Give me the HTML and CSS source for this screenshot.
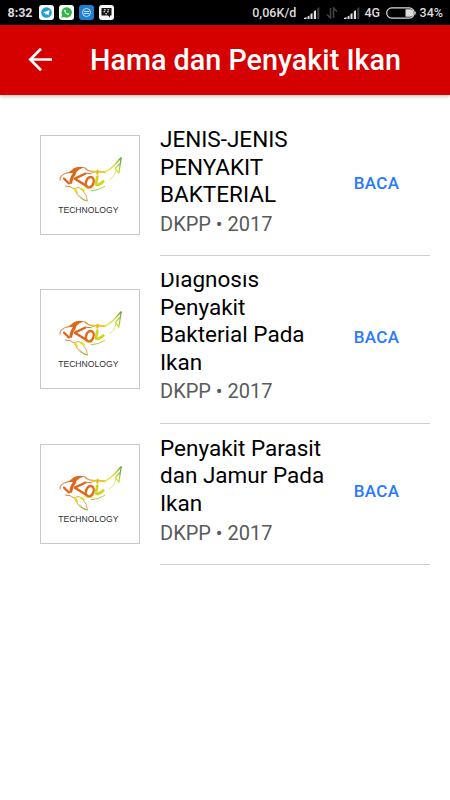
FILE: index.html
```html
<!DOCTYPE html>
<html lang="id">
<head>
<meta charset="utf-8">
<title>Hama dan Penyakit Ikan</title>
<link rel="stylesheet" href="styles.css">
</head>
<body>
<svg class="defs" width="0" height="0" aria-hidden="true">
  <defs>
    <linearGradient id="tail" gradientUnits="userSpaceOnUse" x1="62" y1="36" x2="82" y2="22">
      <stop offset="0" stop-color="#f3e21c"/><stop offset=".55" stop-color="#c8dc22"/><stop offset="1" stop-color="#4f9e2c"/>
    </linearGradient>
    <linearGradient id="body" gradientUnits="userSpaceOnUse" x1="20" y1="40" x2="70" y2="40">
      <stop offset="0" stop-color="#d9601b"/><stop offset=".55" stop-color="#ee9a2c"/><stop offset="1" stop-color="#e8e02a"/>
    </linearGradient>
    <linearGradient id="belly" gradientUnits="userSpaceOnUse" x1="34" y1="48" x2="76" y2="40">
      <stop offset="0" stop-color="#dce024"/><stop offset=".4" stop-color="#8cc84a"/><stop offset="1" stop-color="#d8e430"/>
    </linearGradient>
    <g id="koi" fill="none" stroke-linecap="round" stroke-linejoin="round">
      <path d="M19.500 45C19 42 22 39 27 37.500" stroke="#dd8a50" stroke-width="1.100"/>
      <path d="M25.500 38.500Q30 36.500 33.500 33 37 30.300 45 32 38 33.500 35 38.500Q30 37 25.500 38.500Z" fill="#dc6a1e"/>
      <path d="M44.500 32.300Q48 36.500 52.500 35.800" stroke="#e58b32" stroke-width="1.100"/>
      <path d="M52.500 36.800Q58 35.800 65 37" stroke="#e9c322" stroke-width="2"/>
      <path d="M34.500 38Q30.500 42.500 30.500 47.500" stroke="#dc651b" stroke-width="2.900"/>
      <path d="M45 38.500 34.500 43.500 46.500 51" stroke="#dc651b" stroke-width="2.400"/>
      <path d="M23.500 43.500 28.500 48.500" stroke="#dc651b" stroke-width="2.200"/>
      <path d="M45 38 51.500 38.500" stroke="#e07420" stroke-width="1"/>
      <ellipse cx="49.800" cy="47.200" rx="3.800" ry="5.500" transform="rotate(18 49.800 47.200)" stroke="#df6b1d" stroke-width="2.500"/>
      <path d="M57.500 41.500 56 49Q57.500 51.500 63.500 46.500" stroke="#d3d522" stroke-width="2.900"/>
      <path d="M57.800 35.500 57.500 38.500" stroke="#efb21f" stroke-width="2.200"/>
      <path d="M65 36.800C72 34.500 76 28 81.500 22.500" stroke="url(#tail)" stroke-width="1.300"/>
      <path d="M81.800 22.500 80.500 31 79.500 38 76 33 80 28.500" stroke="url(#tail)" stroke-width="1.200"/>
      <path d="M76.500 34Q76 41 70 44.500" stroke="#dae446" stroke-width=".8"/>
      <path d="M25 51Q31 51 34.500 54.500Q38 50.500 42 55Q47 60 47.500 66Q39.500 65 36 58" stroke="url(#body)" stroke-width=".9"/>
      <path d="M34.500 54 36.500 57.500M41 54 43.500 55.500" stroke="#dce024" stroke-width="2.300"/>
      <path d="M39.500 61.500Q43 66 47 66.500" stroke="#74b83f" stroke-width=".9"/>
      <path d="M51 56Q59 55.500 65 51.500" stroke="url(#belly)" stroke-width="1"/>
      <path d="M43 52Q49 54.500 54 53.500" stroke="#eadb38" stroke-width=".6"/>
    </g>
    <g id="signal">
      <path d="M0 11 2.500 10V12H0ZM3.500 9.500 5.500 8.500V12H3.500ZM6.500 7 8.500 6V12H6.500ZM9.800 4.500 12 3V12H9.800Z" fill="#e2e2e2"/>
      <path d="M13.300 1.500 15.300 0V12H13.300Z" fill="#454545"/>
    </g>
  </defs>
</svg>

<div class="statusbar">
  <span class="clock">8:32</span>
  <div class="notifications">
    <svg width="15" height="15" viewBox="0 0 15 15"><rect width="15" height="15" rx="3" fill="#f7fbfd"/><circle cx="7.500" cy="7.500" r="5.300" fill="#249dd8"/><path d="M4 7.400 10.700 4.900 9.600 10.300 7.600 8.900 6.600 9.900 6.400 8.200Z" fill="#fff"/></svg>
    <svg width="15" height="15" viewBox="0 0 15 15"><rect width="15" height="15" rx="3" fill="#fafdfa"/><path d="M2.300 12.700 3.100 9.900A5.200 5.200 0 1 1 5.200 12Z" fill="#32b64b"/><path d="M5.200 5Q5.200 8.900 9.600 10L10.300 8.800 8.900 8 8.200 8.700Q6.900 8 6.400 6.900L7 6.200 6.400 4.700Z" fill="#fff"/></svg>
    <svg width="15" height="15" viewBox="0 0 15 15"><rect width="15" height="15" rx="3" fill="#1f7fd0"/><circle cx="7.500" cy="7.500" r="4" fill="none" stroke="#c9e3fa" stroke-width="1"/><path d="M5 6.500H10M5 8.500H10" stroke="#c9e3fa" stroke-width="1"/></svg>
    <svg width="15" height="15" viewBox="0 0 15 15"><rect width="15" height="15" rx="3" fill="#f8f8f8"/><path d="M2.500 3H12.500V10.500H11V12.500L9 10.500H2.500Z" fill="#151515"/><path d="M5 4.800H6.800M8.500 4.800H10.200M4.500 6.800H6.200M8 6.800H9.800M6.300 8.800H8" stroke="#fff" stroke-width="1"/></svg>
  </div>
  <div class="system">
    <span class="speed">0,06K/d</span>
    <svg class="sig1" width="16" height="12"><use href="#signal"/></svg>
    <svg class="arrows" width="12" height="12" viewBox="0 0 12 12" fill="none" stroke="#464646" stroke-width="1.500"><path d="M4.500 1V11L1 7.500M7.500 11V1L11 4.500"/></svg>
    <svg class="sig2" width="16" height="12"><use href="#signal"/></svg>
    <span class="network">4G</span>
    <svg class="battery" width="31" height="12" viewBox="0 0 31 12"><rect x=".7" y=".9" width="27.600" height="10.200" rx="5" fill="none" stroke="#dcdcdc" stroke-width="1.200"/><path d="M19.500 2.300H24A3.700 3.700 0 0 1 24 9.700H19.500Z" fill="#dcdcdc"/><path d="M29 3.500Q30.800 6 29 8.500Z" fill="#dcdcdc"/></svg>
    <span class="percent">34%</span>
  </div>
</div>

<header class="appbar">
  <svg class="back" width="24" height="24" viewBox="0 0 24 24" fill="none" stroke="#fff" stroke-width="2.700"><path d="M24 11.500H2.500M13 .8 2.300 11.500 13 22.200"/></svg>
  <h1>Hama dan Penyakit Ikan</h1>
</header>

<main class="list">
  <article class="item">
    <svg class="thumb" width="100" height="100" viewBox="0 0 100 100"><use href="#koi"/><text x="17.500" y="78.500" textLength="61.500" lengthAdjust="spacingAndGlyphs">TECHNOLOGY</text></svg>
    <div class="content">
      <div class="text"><h2>JENIS-JENIS PENYAKIT BAKTERIAL</h2><p>DKPP • 2017</p></div>
      <a class="read">BACA</a>
    </div>
  </article>
  <article class="item item-clipped">
    <svg class="thumb" width="100" height="100" viewBox="0 0 100 100"><use href="#koi"/><text x="17.500" y="78.500" textLength="61.500" lengthAdjust="spacingAndGlyphs">TECHNOLOGY</text></svg>
    <div class="content">
      <div class="text"><h2>Diagnosis Penyakit Bakterial Pada Ikan</h2><p>DKPP • 2017</p></div>
      <a class="read">BACA</a>
    </div>
  </article>
  <article class="item">
    <svg class="thumb" width="100" height="100" viewBox="0 0 100 100"><use href="#koi"/><text x="17.500" y="78.500" textLength="61.500" lengthAdjust="spacingAndGlyphs">TECHNOLOGY</text></svg>
    <div class="content">
      <div class="text"><h2>Penyakit Parasit dan Jamur Pada Ikan</h2><p>DKPP • 2017</p></div>
      <a class="read">BACA</a>
    </div>
  </article>
</main>
</body>
</html>
```
FILE: styles.css
```css
* { box-sizing: border-box; }
body { margin: 0; height: 800px; overflow: hidden; background: #fff; font-family: Roboto, sans-serif; color: #000; }
h1, h2, p { margin: 0; }
svg { display: block; flex: none; }
.defs { position: absolute; }

.statusbar { display: flex; align-items: center; height: 25px; padding: 0 7.5px; background: #000; color: #dcdcdc; font-size: 12.5px; font-weight: 500; line-height: 25px; white-space: nowrap; }
.clock { width: 31px; font-weight: 700; }
.notifications { display: flex; gap: 5px; }
.system { display: flex; align-items: center; margin-left: auto; }
.speed { letter-spacing: .05px; }
.sig1 { margin-left: 7.5px; }
.arrows { margin: 0 5px 0 6px; }
.sig2 { margin-left: 1px; }
.network { margin-left: 4.5px; }
.battery { margin: 1px 2.5px 0 6px; }
.percent { margin-right: -.5px; }

.appbar { position: relative; display: flex; align-items: center; height: 70px; padding-left: 28px; background: #d50000; box-shadow: 0 1px 4px rgba(0, 0, 0, .3); color: #fff; }
.appbar h1 { margin-left: 38px; font-size: 28.75px; font-weight: 500; line-height: 70px; white-space: nowrap; }

.list { padding: 20px 20px 0 40px; }
.item { display: flex; align-items: center; }
.thumb { width: 100px; height: 100px; border: 1px solid #c8c8c8; margin: -1px 20px 0 0; }
.thumb text { font-family: "Liberation Sans", sans-serif; font-size: 8.5px; fill: #303030; }
.content { display: flex; flex: 1; align-items: center; border-bottom: 1px solid #cfcfcf; }
.text { width: 173px; margin: 16px 0 14.5px; overflow: hidden; }
.text h2 { margin-top: -5px; font-size: 22.5px; font-weight: 400; line-height: 27.5px; }
.text p { font-size: 20px; line-height: 31px; padding-bottom: 1px; color: #5a5a5a; }
.item:first-child p { padding: .5px 0; }
.item-clipped .text { margin: 17px 0 13.7px; }
.item-clipped h2 { margin-top: -6.7px; }
.item-clipped p { padding-bottom: 1.5px; }
.item:last-child p { padding: .5px 0; }
.read { flex: 1; padding-right: 10px; margin-top: -5px; text-align: center; font-size: 17px; font-weight: 500; letter-spacing: .3px; color: #2979ff; }
```
